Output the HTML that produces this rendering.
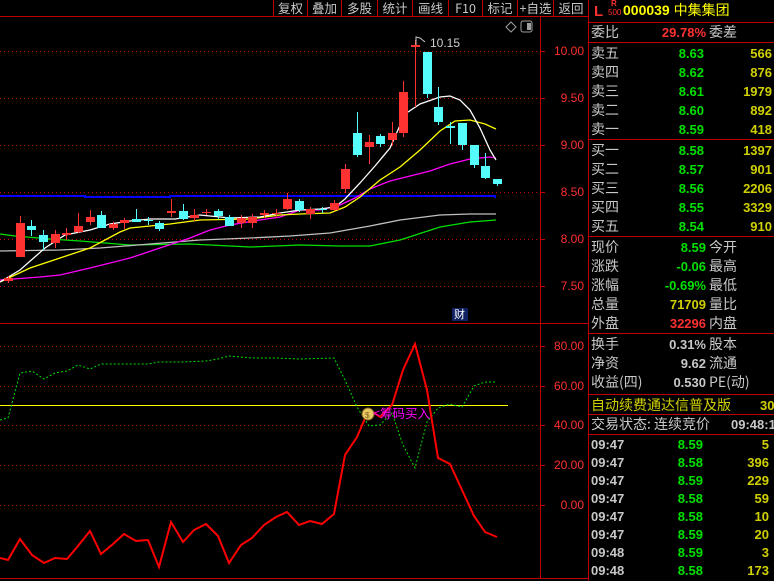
<!DOCTYPE html>
<html><head><meta charset="utf-8"><style>
*{margin:0;padding:0;box-sizing:border-box}
body{width:774px;height:581px;background:#000;overflow:hidden;position:relative;font-family:"Liberation Sans","Noto Sans CJK SC",sans-serif;}
.a{position:absolute;white-space:nowrap;line-height:1}
.l{color:#c8c8c8;font-size:14px;font-family:"Noto Sans CJK SC",sans-serif}
.n{font-size:13px;font-weight:bold;text-align:right}
.g{color:#00e000}.y{color:#d0d000}.r{color:#ff3030}.w{color:#c8c8c8}
.tb{position:absolute;top:0;height:16px;border-left:1px solid #c00000;color:#c8c8c8;font-size:12.5px;text-align:center;line-height:15px;font-family:"Noto Sans CJK SC",sans-serif}
.ax{position:absolute;left:546px;width:38px;text-align:right;color:#ff3030;font-size:12px;line-height:1}
.hl{position:absolute;left:589px;width:185px;height:1px;background:#c00000}
</style></head><body>
<!-- toolbar -->
<div class="tb" style="left:273px;width:34px">复权</div>
<div class="tb" style="left:307px;width:34px">叠加</div>
<div class="tb" style="left:341px;width:36px">多股</div>
<div class="tb" style="left:377px;width:35px">统计</div>
<div class="tb" style="left:412px;width:36px">画线</div>
<div class="tb" style="left:448px;width:34px">F10</div>
<div class="tb" style="left:482px;width:35px">标记</div>
<div class="tb" style="left:517px;width:36px">+自选</div>
<div class="tb" style="left:553px;width:35px">返回</div>
<div style="position:absolute;left:0;top:16px;width:589px;height:1px;background:#c00000"></div>

<svg width="589" height="581" style="position:absolute;left:0;top:0" shape-rendering="crispEdges">
<g stroke="#c00000" stroke-width="1" stroke-dasharray="1,3">
<line x1="0" y1="51.5" x2="540" y2="51.5"/><line x1="0" y1="98.5" x2="540" y2="98.5"/><line x1="0" y1="145.5" x2="540" y2="145.5"/><line x1="0" y1="192.5" x2="540" y2="192.5"/><line x1="0" y1="239.5" x2="540" y2="239.5"/><line x1="0" y1="286.5" x2="540" y2="286.5"/>
<line x1="0" y1="346.5" x2="540" y2="346.5"/><line x1="0" y1="386.5" x2="540" y2="386.5"/><line x1="0" y1="425.5" x2="540" y2="425.5"/><line x1="0" y1="465.5" x2="540" y2="465.5"/><line x1="0" y1="505.5" x2="540" y2="505.5"/>
</g>
<g stroke="#c00000">
<line x1="540.5" y1="16" x2="540.5" y2="578"/><line x1="588.5" y1="0" x2="588.5" y2="581"/>
<line x1="0" y1="323.5" x2="589" y2="323.5"/><line x1="0" y1="578.5" x2="589" y2="578.5"/>
<line x1="540" y1="51.5" x2="545" y2="51.5"/><line x1="540" y1="98.5" x2="545" y2="98.5"/><line x1="540" y1="145.5" x2="545" y2="145.5"/><line x1="540" y1="192.5" x2="545" y2="192.5"/><line x1="540" y1="239.5" x2="545" y2="239.5"/><line x1="540" y1="286.5" x2="545" y2="286.5"/>
<line x1="540" y1="346.5" x2="545" y2="346.5"/><line x1="540" y1="386.5" x2="545" y2="386.5"/><line x1="540" y1="425.5" x2="545" y2="425.5"/><line x1="540" y1="465.5" x2="545" y2="465.5"/><line x1="540" y1="505.5" x2="545" y2="505.5"/>
</g>
<!-- MA lines -->
<g fill="none" stroke-width="1.3" shape-rendering="auto">
<polyline stroke="#0000ff" stroke-width="2" points="0,196 85,196 85,197 170,197 170,196 495,196 495,198"/>
<polyline stroke="#00e000" points="0,234 15,236 50,239 80,241 130,245 190,244 250,247 300,245 340,246 370,246 400,240 440,227 470,222 496,220"/>
<polyline stroke="#c0c0c0" points="0,251 60,250 100,248 150,244 200,240 250,238 290,236 330,233 370,226 400,220 440,215 470,214 496,214"/>
<polyline stroke="#ff00ff" points="0,280 40,277 60,275 90,268 130,258 160,248 190,238 210,230 230,225 260,220 280,217 300,210 320,210 340,205 355,198 370,189 390,181 410,176 430,171 450,164 470,159 490,157 496,158"/>
<polyline stroke="#ffff00" points="0,282 30,268 60,258 90,248 120,232 130,228 150,226 170,224 200,220 250,219 280,215 300,214 330,213 345,207 360,197 380,180 400,167 420,150 440,131 455,121 470,120 485,124 496,129"/>
<polyline stroke="#ffffff" points="0,282 20,270 45,248 65,235 90,230 110,224 130,221 150,219 175,219 200,215 230,218 260,217 280,213 300,210 320,209 335,207 345,199 360,183 375,166 390,148 405,114 420,104 440,97 450,96 460,100 470,110 480,128 490,150 496,160"/>
</g>
<!-- candles -->
<g id="c"></g>
<!-- sub chart -->
<line x1="0" y1="405.5" x2="508" y2="405.5" stroke="#ffff00"/>
<g fill="none" shape-rendering="auto">
<polyline stroke="#00e000" stroke-width="1" stroke-dasharray="2,2" points="0,420 8,418 20,373 32,371 44,379 55,373 67,371 78,365 90,369 101,364 124,364 148,364 159,362 183,362 206,361 218,359 229,356 252,358 276,358 299,359 334,358 345,380 357,407 369,426 380,425 392,413 403,445 415,468 427,422 438,408 450,404 462,407 474,386 485,382 497,382"/>
<polyline stroke="#ff0000" stroke-width="2" points="0,558 8,560 20,539 32,555 44,563 55,558 67,559 78,546 90,531 101,554 113,544 124,534 136,541 148,540 159,567 171,522 183,542 194,530 206,524 218,536 229,563 241,545 252,538 264,525 276,517 287,512 299,525 310,521 322,524 334,514 345,455 357,437 369,409 380,417 392,405 403,370 415,344 427,390 438,458 450,464 462,490 474,516 485,532 497,537"/>
<circle cx="368" cy="414" r="6" fill="#e8c860" stroke="#806020"/>
<text x="365" y="418" font-size="8" fill="#806020" font-family="Liberation Sans">$</text>
</g>
<!-- icons -->
<g shape-rendering="auto">
<path d="M511 22 L516 27 L511 32 L506 27 Z" fill="none" stroke="#a0a0a0"/>
<rect x="521" y="21" width="11" height="11" rx="2" fill="none" stroke="#a0a0a0"/>
<rect x="527" y="23" width="4" height="7" fill="#a0a0a0"/>
<path d="M416 45 L416 37 L420 38 L425 42" fill="none" stroke="#c8c8c8"/>
</g>
<rect x="452" y="308" width="16" height="13" fill="#102060"/>
</svg>
<div class="a" style="left:430px;top:37px;color:#d0d0d0;font-size:12px">10.15</div>
<div class="a" style="left:454px;top:309px;color:#fff;font-size:11px;font-family:'Noto Sans CJK SC',sans-serif">财</div>
<div class="a" style="left:373px;top:407px;color:#ff00ff;font-size:12.5px;font-family:'Noto Sans CJK SC',sans-serif">&lt;筹码买入</div>

<div class="ax" style="top:45px">10.00</div><div class="ax" style="top:92px">9.50</div><div class="ax" style="top:139px">9.00</div><div class="ax" style="top:186px">8.50</div><div class="ax" style="top:233px">8.00</div><div class="ax" style="top:280px">7.50</div>
<div class="ax" style="top:340px">80.00</div><div class="ax" style="top:380px">60.00</div><div class="ax" style="top:419px">40.00</div><div class="ax" style="top:459px">20.00</div><div class="ax" style="top:499px">0.00</div>

<!-- right panel -->
<div class="a r" style="left:594px;top:4px;font-size:15px;font-weight:bold">L</div>
<div class="a r" style="left:611px;top:0px;font-size:8px;font-weight:bold">R</div>
<div class="a r" style="left:608px;top:9px;font-size:8px">500</div>
<div class="a" style="left:623px;top:3px;color:#ffff00;font-size:14px;font-weight:bold">000039 <span style="font-family:'Noto Sans CJK SC';font-weight:normal">中集集团</span></div>
<div class="hl" style="top:22px"></div>
<div class="a l" style="left:591px;top:25px">委比</div>
<div class="a n r" style="left:640px;top:26px;width:66px">29.78%</div>
<div class="a l" style="left:709px;top:25px">委差</div>
<div class="hl" style="top:42px"></div>
<div id="ob"></div>
<div class="hl" style="top:139px"></div>
<div class="hl" style="top:236px"></div>
<div class="hl" style="top:333px"></div>
<div class="hl" style="top:394px"></div>
<div class="hl" style="top:414px"></div>
<div class="hl" style="top:434px"></div>
<div class="a y" style="left:591px;top:398px;font-size:14px;font-family:'Noto Sans CJK SC'">自动续费通达信普及版</div>
<div class="a y" style="left:760px;top:399px;font-size:13px;font-weight:bold">30</div>
<div class="a l" style="left:591px;top:417px">交易状态: 连续竞价</div>
<div class="a w" style="left:731px;top:418px;font-size:13px;font-weight:bold">09:48:1</div>
<script>
var C=[[8,'r',278,281,276,283],[20,'r',223,257,216,257],[31,'c',226,230,220,236],[43,'c',235,242,230,250],[55,'r',234,243,230,248],[66,'r',233,235,228,240],[78,'r',226,232,213,233],[90,'r',217,222,210,225],[101,'c',215,228,211,228],[113,'r',224,228,222,230],[124,'r',220,223,218,229],[136,'c',219,222,209,222],[148,'c',220,221,217,225],[159,'c',223,229,221,231],[171,'r',211,213,199,217],[183,'c',211,219,204,220],[194,'r',215,218,209,221],[206,'r',212,213,209,215],[218,'c',211,216,209,219],[229,'c',217,226,215,226],[241,'r',218,223,215,228],[252,'r',217,223,214,228],[264,'r',213,215,210,218],[276,'r',213,214,209,218],[287,'r',199,209,193,210],[299,'c',201,210,199,212],[310,'r',209,214,207,219],[322,'c',209,210,207,213],[334,'r',203,210,200,211],[345,'r',169,189,164,193],[357,'c',133,155,112,157],[369,'r',142,147,135,164],[380,'c',136,144,134,147],[392,'r',133,140,122,145],[403,'r',92,133,81,137],[415,'r',45,47,40,107],[427,'c',52,94,52,98],[438,'c',107,122,87,125],[450,'c',126,128,122,144],[462,'c',123,145,123,150],[474,'c',145,165,145,168],[485,'c',166,178,153,179],[497,'c',179,184,179,186]];
var s='';C.forEach(function(k){var col=k[1]=='r'?'#ff3232':'#54fcfc';var h=Math.max(1,k[3]-k[2]);
s+='<line x1="'+(k[0]+.5)+'" y1="'+k[4]+'" x2="'+(k[0]+.5)+'" y2="'+k[5]+'" stroke="'+col+'"/>';
if(k[1]=='r'&&h>2)s+='<rect x="'+(k[0]-4)+'" y="'+k[2]+'" width="9" height="'+h+'" fill="#ff3232"/>';
else s+='<rect x="'+(k[0]-4)+'" y="'+k[2]+'" width="9" height="'+h+'" fill="'+col+'"/>';});
document.getElementById('c').innerHTML=s;
var R=[['卖五','8.63','566',46],['卖四','8.62','876',65],['卖三','8.61','1979',84],['卖二','8.60','892',103],['卖一','8.59','418',122],['买一','8.58','1397',143],['买二','8.57','901',162],['买三','8.56','2206',181],['买四','8.55','3329',200],['买五','8.54','910',219]];
var o='';R.forEach(function(r){o+='<div class="a l" style="left:591px;top:'+r[3]+'px">'+r[0]+'</div><div class="a n g" style="left:640px;top:'+(r[3]+1)+'px;width:64px">'+r[1]+'</div><div class="a n y" style="left:710px;top:'+(r[3]+1)+'px;width:62px">'+r[2]+'</div>';});
var Q=[['现价','8.59','g','今开',240],['涨跌','-0.06','g','最高',259],['涨幅','-0.69%','g','最低',278],['总量','71709','y','量比',297],['外盘','32296','r','内盘',316],['换手','0.31%','w','股本',337],['净资','9.62','w','流通',356],['收益(四)','0.530','w','PE(动)',375]];
Q.forEach(function(r){o+='<div class="a l" style="left:591px;top:'+r[4]+'px">'+r[0]+'</div><div class="a n '+r[2]+'" style="left:630px;top:'+(r[4]+1)+'px;width:76px">'+r[1]+'</div><div class="a l" style="left:709px;top:'+r[4]+'px">'+r[3]+'</div>';});
var T=[['09:47','8.59','5'],['09:47','8.58','396'],['09:47','8.59','229'],['09:47','8.58','59'],['09:47','8.58','10'],['09:47','8.59','20'],['09:48','8.59','3'],['09:48','8.58','173']];
T.forEach(function(r,i){var t=438+i*18;o+='<div class="a n w" style="left:591px;top:'+t+'px;text-align:left">'+r[0]+'</div><div class="a n g" style="left:640px;top:'+t+'px;width:63px">'+r[1]+'</div><div class="a n y" style="left:710px;top:'+t+'px;width:59px">'+r[2]+'</div>';});
document.getElementById('ob').innerHTML=o;
</script>
</body></html>
